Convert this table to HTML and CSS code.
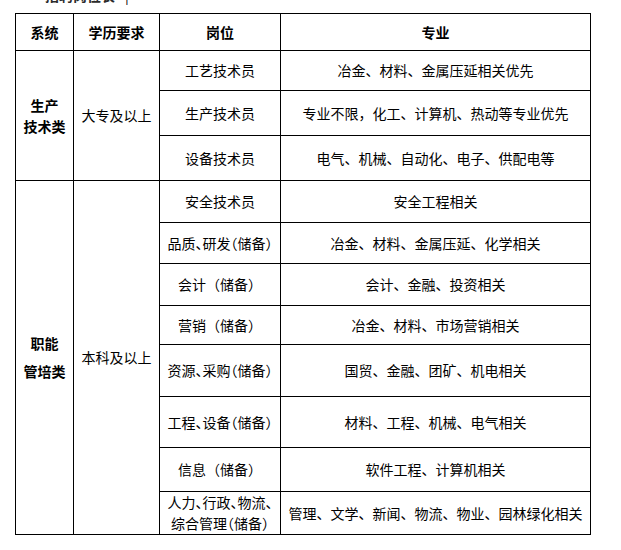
FILE: index.html
```html
<!DOCTYPE html>
<html lang="zh-CN">
<head>
<meta charset="utf-8">
<title>岗位需求</title>
<link rel="stylesheet" href="styles.css">
</head>
<body>
<div class="cut-heading"><div class="cut-text">招聘岗位表<span class="caret">|</span></div></div>
<table class="jobs">
  <colgroup>
    <col class="c1"><col class="c2"><col class="c3"><col class="c4">
  </colgroup>
  <thead>
    <tr class="h-head">
      <th>系统</th><th>学历要求</th><th>岗位</th><th>专业</th>
    </tr>
  </thead>
  <tbody>
    <tr class="h40">
      <td rowspan="3" class="sys sys-a">生产<br>技术类</td>
      <td rowspan="3" class="edu edu-a">大专及以上</td>
      <td>工艺技术员</td><td>冶金、材料、金属压延相关优先</td>
    </tr>
    <tr class="h45"><td>生产技术员</td><td>专业不限，化工、计算机、热动等专业优先</td></tr>
    <tr class="h45"><td>设备技术员</td><td>电气、机械、自动化、电子、供配电等</td></tr>
    <tr class="h42">
      <td rowspan="8" class="sys sys-b"><span class="l1">职能</span><span class="l2">管培类</span></td>
      <td rowspan="8" class="edu edu-b">本科及以上</td>
      <td>安全技术员</td><td>安全工程相关</td>
    </tr>
    <tr class="h41"><td class="tight">品质、研发（储备）</td><td>冶金、材料、金属压延、化学相关</td></tr>
    <tr class="h42"><td>会计（储备）</td><td>会计、金融、投资相关</td></tr>
    <tr class="h39"><td>营销（储备）</td><td>冶金、材料、市场营销相关</td></tr>
    <tr class="h52"><td class="tight">资源、采购（储备）</td><td>国贸、金融、团矿、机电相关</td></tr>
    <tr class="h51"><td class="tight">工程、设备（储备）</td><td>材料、工程、机械、电气相关</td></tr>
    <tr class="h44"><td>信息（储备）</td><td>软件工程、计算机相关</td></tr>
    <tr class="h41"><td class="tight wrap">人力、行政、物流、<br>综合管理（储备）</td><td>管理、文学、新闻、物流、物业、园林绿化相关</td></tr>
  </tbody>
</table>
</body>
</html>
```

FILE: styles.css
```css
html, body {
  margin: 0;
  padding: 0;
  background: #ffffff;
}

body {
  font-family: "Noto Sans CJK SC", "Liberation Sans", sans-serif;
  font-size: 14px;
  color: #000000;
}

.cut-heading {
  height: 13px;
  overflow: hidden;
  padding-left: 45px;
}

.cut-text {
  margin-top: -15px;
  font-size: 14px;
  line-height: 20px;
  color: #2b2b2b;
  font-weight: bold;
}

.caret {
  font-weight: normal;
  margin-left: 10px;
  color: #000;
}

.jobs {
  margin-left: 15px;
  border-collapse: collapse;
  table-layout: fixed;
  width: 575px;
}

.c1 { width: 58px; }
.c2 { width: 86px; }
.c3 { width: 121px; }
.c4 { width: 310px; }

.jobs th,
.jobs td {
  border: 1px solid #000000;
  padding: 0;
  text-align: center;
  vertical-align: middle;
  line-height: 21px;
  white-space: nowrap;
}

.jobs th {
  font-weight: bold;
}

.h-head { height: 37px; }
.h39 { height: 39px; }
.h40 { height: 40px; }
.h41 { height: 41px; }
.h42 { height: 42px; }
.h44 { height: 44px; }
.h45 { height: 45px; }
.h51 { height: 51px; }
.h52 { height: 52px; }

.sys {
  font-weight: bold;
}

.sys-a {
  padding-bottom: 4px;
}

.sys-b .l1,
.sys-b .l2 {
  display: block;
}

.sys-b .l2 {
  margin-top: 7px;
}

.sys-b {
  padding-bottom: 4px;
}

.edu-a {
  padding-bottom: 4px;
}

.edu-b {
  padding-bottom: 4px;
}

.tight {
  font-feature-settings: "halt" 1;
}

.wrap {
  text-align: left;
  padding-left: 6px;
  line-height: 21px;
}
```
